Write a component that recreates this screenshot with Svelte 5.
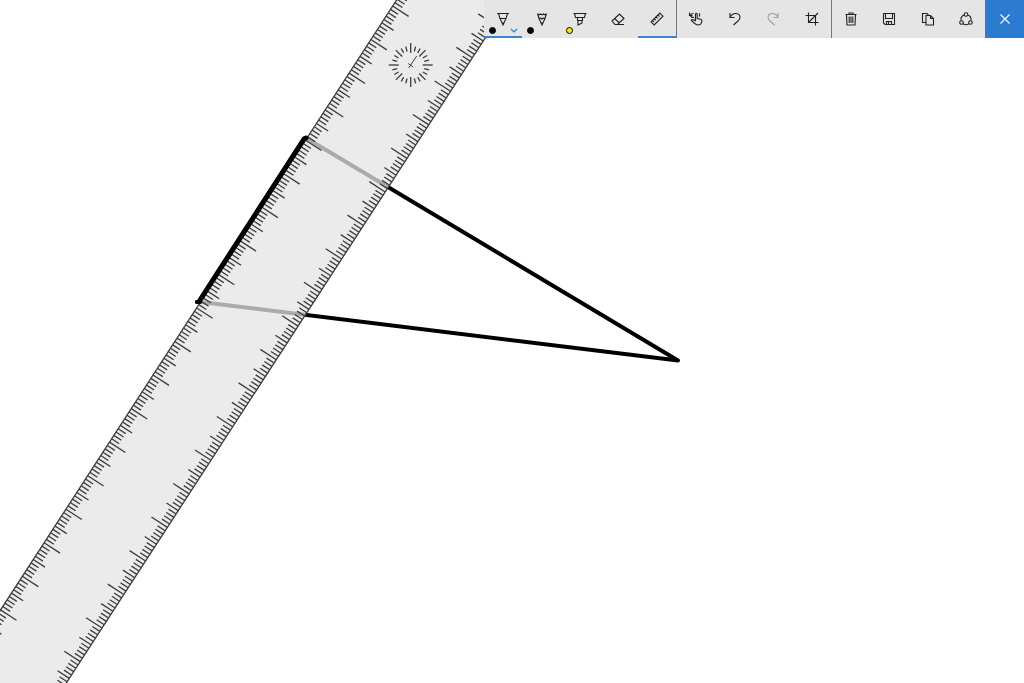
<script lang="ts">
  interface Tool {
    id: string;
    label: string;
    dot?: string;
    menu?: boolean;
    active?: boolean;
    divider?: boolean;
    disabled?: boolean;
    close?: boolean;
  }

  const tools: Tool[] = [
    { id: 'pen', label: 'Ballpoint pen', dot: '#000', menu: true, active: true },
    { id: 'pencil', label: 'Pencil', dot: '#000' },
    { id: 'marker', label: 'Highlighter', dot: '#ffec00' },
    { id: 'eraser', label: 'Eraser' },
    { id: 'ruler', label: 'Ruler', active: true },
    { id: 'touch', label: 'Touch writing', divider: true },
    { id: 'undo', label: 'Undo' },
    { id: 'redo', label: 'Redo', disabled: true },
    { id: 'crop', label: 'Crop' },
    { id: 'trash', label: 'Clear all', divider: true },
    { id: 'save', label: 'Save' },
    { id: 'copy', label: 'Copy' },
    { id: 'share', label: 'Share' },
    { id: 'close', label: 'Close', close: true },
  ];

  // Ruler runs along its own x axis, rotated onto the sketch
  const rulerLength = 920;
  const rulerWidth = 95;
  const rulerStart = -120;

  function tickLength(i: number): number {
    if (i % 10 === 0) return 19;
    if (i % 5 === 0) return 14;
    return 9;
  }

  const ticks = Array.from({ length: 230 }, (_, i) => ({
    x: rulerStart + 1 + i * 4,
    size: tickLength(i),
  }));

  const dial = Array.from({ length: 24 }, (_, i) => ({
    angle: i * 15,
    inner: i % 3 === 0 ? 12 : 14,
    outer: i % 6 === 0 ? 22 : i % 3 === 0 ? 21 : 19,
  }));
</script>

<main class="board">
  <svg class="sketch" width="1024" height="683" viewBox="0 0 1024 683" role="img" aria-label="Sketch with ruler">
    <path class="ink" d="M197 302 L201 302 L678 360.5 L306 138 L304 139 L201 300" />
    <g transform="translate(0 610.7) rotate(-57)">
      <rect class="ruler-body" x={rulerStart} y="0" width={rulerLength} height={rulerWidth} />
      <g class="marks">
        <path d="M{rulerStart} 0 h{rulerLength} M{rulerStart} {rulerWidth} h{rulerLength}" />
        {#each ticks as tick (tick.x)}
          <path d="M{tick.x} 0 v{tick.size} M{tick.x} {rulerWidth} v{-tick.size}" />
        {/each}
      </g>
    </g>
    <path class="ink" d="M197 302 L200 302" />
    <path class="ink edge" d="M200 300 L304 139 L306 138" />
    <g class="dial" transform="translate(410.7 65)">
      {#each dial as mark (mark.angle)}
        <path d="M0 {-mark.inner} V{-mark.outer}" transform="rotate({mark.angle})" />
      {/each}
      <path class="needle" d="M-2 3 L6 -9 M-2.5 -1.5 L2.5 2" />
    </g>
  </svg>

  <nav class="toolbar" aria-label="Ink tools">
    {#each tools as tool (tool.id)}
      <button
        type="button"
        class="tool"
        class:active={tool.active}
        class:divider={tool.divider}
        class:close={tool.close}
        disabled={tool.disabled}
        aria-label={tool.label}
      >
        <svg class="icon" viewBox="0 0 16 16" width="16" height="16" aria-hidden="true">
          {#if tool.id === 'pen'}
            <path d="M2 2.5H14M3.5 2.5L5 7.5H11L12.5 2.5M5 7.5L8 14L11 7.5M7 12H9" />
          {:else if tool.id === 'pencil'}
            <path d="M3.5 2.5L5 7.5L8 14L11 7.5L12.5 2.5M3.5 2.5Q5 4.5 6.5 3Q8 4.5 9.5 3Q11 4.5 12.5 2.5M5 7.5Q6.5 6.5 8 8Q9.5 6.5 11 7.5M7 12H9" />
          {:else if tool.id === 'marker'}
            <path d="M1.5 2.5H14.5M2.5 2.5L3.5 6.5H12.5L13.5 2.5M5.5 6.5V9.5H10.5V6.5M6 9.5V14L10 12V9.5" />
          {:else if tool.id === 'eraser'}
            <path d="M2 10L9.5 3L14 7.5L7.5 13.5H5L2 10ZM4.5 7.5L9.5 12M5 13.5H14" />
          {:else if tool.id === 'ruler'}
            <path d="M2 10.8L10.8 2L14 5.2L5.2 14ZM9 4L10.5 5.5M7.2 5.8L8.7 7.3M5.4 7.6L6.9 9.1M3.6 9.4L5.1 10.9" />
          {:else if tool.id === 'touch'}
            <path d="M7.5 10V3Q8.3 1.7 9.2 3V7.5L12.8 8.3Q14.2 8.6 13.9 10.5Q13.3 14 10 14Q8 14 6.5 12.2L3.2 9.5Q4 8.2 5.5 8.8L7.5 10M6 6.5Q3 6.5 2.5 4.5Q2.5 2.5 5.5 2.5M1.5 1.5V4.5H4.5M11 2.5Q12.5 3.5 11 5.5" />
          {:else if tool.id === 'undo'}
            <path d="M3 2V6.5H7.5M3 6.5Q5 2.5 8.5 2.5Q13 2.5 13 6.5Q13 8 11 10L6.5 14" />
          {:else if tool.id === 'redo'}
            <path d="M13 2V6.5H8.5M13 6.5Q11 2.5 7.5 2.5Q3 2.5 3 6.5Q3 8 5 10L9.5 14" />
          {:else if tool.id === 'crop'}
            <path d="M4.5 1.5V11.5H14.5M1.5 4.5H11.5V14.5M4.5 11.5L14 2" />
          {:else if tool.id === 'trash'}
            <path d="M2.5 3.5H13.5M6 3.5V2H10V3.5M3.5 3.5L4 14H12L12.5 3.5M6.2 5.5V12M8 5.5V12M9.8 5.5V12" />
          {:else if tool.id === 'save'}
            <path d="M2.5 2.5H13.5V13.5H4L2.5 12ZM4.5 2.5V7.5H11.5V2.5M5.5 13.5V10.5H10.5V13.5M7.5 11V13" />
          {:else if tool.id === 'copy'}
            <path d="M6 11.5H2.5V2.5H7L8.5 4M6 4.5H10.5L13.5 7.5V14H6ZM10.5 4.5V7.5H13.5" />
          {:else if tool.id === 'share'}
            <circle cx="8" cy="3.5" r="1.8" />
            <circle cx="3.5" cy="11.5" r="1.8" />
            <circle cx="12.5" cy="11.5" r="1.8" />
            <path d="M6 4Q2.5 5.5 3 9.5M10 4Q13.5 5.5 13 9.5M5 12.8Q8 14.8 11 12.8" />
          {:else}
            <path d="M3.5 3.5L12.5 12.5M12.5 3.5L3.5 12.5" />
          {/if}
        </svg>
        {#if tool.dot}
          <span class="dot" style="background: {tool.dot}"></span>
        {/if}
        {#if tool.menu}
          <svg class="chevron" viewBox="0 0 8 5" width="8" height="5" aria-hidden="true">
            <path d="M1 1L4 4L7 1" />
          </svg>
        {/if}
      </button>
    {/each}
  </nav>
</main>

<style>
  :global(body) {
    margin: 0;
    background: #fff;
    font-family: 'Open Sans', sans-serif;
  }

  .board {
    position: relative;
    min-height: 100vh;
    overflow: hidden;
    background: #fff;
  }

  .sketch {
    position: absolute;
    top: 0;
    left: 0;
  }

  .ink {
    fill: none;
    stroke: #000;
    stroke-width: 4;
    stroke-linecap: round;
    stroke-linejoin: round;
  }

  .ink.edge {
    stroke-width: 5;
  }

  .ruler-body {
    fill: rgba(228, 228, 228, 0.75);
  }

  .marks path,
  .dial path {
    fill: none;
    stroke: #3c3c3c;
    stroke-width: 1.3;
  }

  .dial .needle {
    stroke-width: 1;
  }

  .toolbar {
    position: relative;
    display: flex;
    width: 540px;
    max-width: 100%;
    margin-left: auto;
    background: #e5e5e5;
  }

  .tool {
    position: relative;
    box-sizing: border-box;
    display: flex;
    flex: 1 1 0;
    align-items: center;
    justify-content: center;
    height: 38px;
    padding: 0;
    border: 0;
    background: transparent;
    color: #222;
  }

  .tool.active::after {
    content: '';
    position: absolute;
    inset: auto 0 0;
    height: 2px;
    background: #3b86d1;
  }

  .tool.divider {
    border-left: 1px solid #777;
  }

  .tool:disabled {
    color: #a0a0a0;
  }

  .tool.close {
    background: #2b7cd0;
    color: #fff;
  }

  .icon,
  .chevron {
    fill: none;
    stroke: currentColor;
    stroke-width: 1.1;
  }

  .dot {
    position: absolute;
    left: 5px;
    bottom: 4px;
    box-sizing: border-box;
    width: 7px;
    height: 7px;
    border: 1px solid #000;
    border-radius: 50%;
  }

  .chevron {
    position: absolute;
    right: 4px;
    bottom: 5px;
    color: #2b7cd0;
  }
</style>
